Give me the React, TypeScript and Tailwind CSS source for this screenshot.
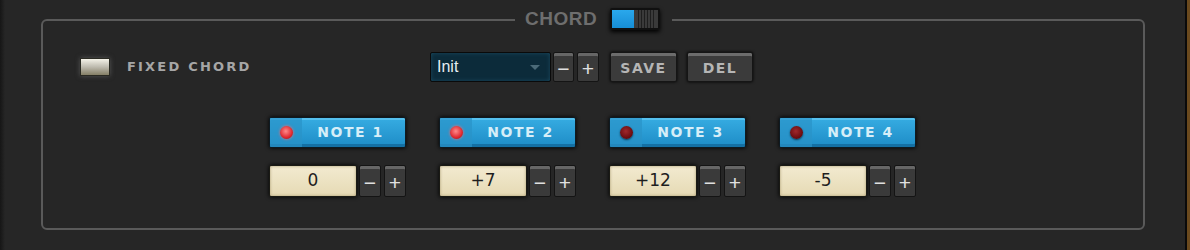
import React from "react";

type Note = { label: string; value: string; lit: boolean };

const notes: Note[] = [
  { label: "NOTE 1", value: "0", lit: true },
  { label: "NOTE 2", value: "+7", lit: true },
  { label: "NOTE 3", value: "+12", lit: false },
  { label: "NOTE 4", value: "-5", lit: false },
];

const font = { fontFamily: '"DejaVu Sans", Verdana, sans-serif' };

function StepButton({ sign, wide }: { sign: string; wide?: boolean }) {
  return (
    <div
      className={`flex h-full items-center justify-center rounded-[2px] border border-[#141414] bg-[#3a3a3a] text-[21px] leading-none text-[#e0e0e0] shadow-[inset_0_3px_0_#666] ${
        wide ? "w-[22px]" : "w-[21px]"
      }`}
      style={{ fontFamily: '"Liberation Sans", Arial, sans-serif' }}
    >
      <span className="mt-[3px]">{sign}</span>
    </div>
  );
}

function GrayButton({ label, width }: { label: string; width: string }) {
  return (
    <div
      className={`flex h-[30px] items-center justify-center rounded-[2px] border border-[#151515] bg-[#3b3b3b] text-[14px] font-bold tracking-[1.5px] text-[#b5b5b5] shadow-[inset_0_3px_0_#6c6c6c,0_0_3px_#000] ${width}`}
      style={font}
    >
      <span className="mt-[2px]">{label}</span>
    </div>
  );
}

function NoteColumn({ note }: { note: Note }) {
  return (
    <div className="flex w-[137px] flex-col">
      <div className="flex h-[31px] overflow-hidden rounded-[2px] border border-[#0d1a22] bg-gradient-to-b from-[#36ace2] to-[#1d8cc6] shadow-[inset_0_-3px_0_#1470a4,inset_0_2px_0_#55c0ee,0_0_4px_#000]">
        <div className="flex w-[32px] items-center justify-center bg-[#2a93c8]/70">
          <div
            className={`h-[13px] w-[13px] rounded-full ${
              note.lit
                ? "bg-[radial-gradient(circle_at_45%_40%,#ff8a8a,#e0282f_60%,#8a1016)] shadow-[0_0_3px_#ff6b6b]"
                : "bg-[radial-gradient(circle_at_45%_40%,#a0282c,#6a0c10_65%,#3a0508)] shadow-[0_1px_2px_#0a3a55]"
            }`}
          />
        </div>
        <div
          className="flex flex-1 items-center justify-center pr-[6px] text-[14px] font-bold tracking-[1.5px] text-[#d6eef8]"
          style={font}
        >
          {note.label}
        </div>
      </div>
      <div className="mt-[17px] flex h-[32px]">
        <div
          className="flex w-[88px] items-center justify-center rounded-[2px] border border-[#1a1a14] bg-gradient-to-b from-[#f2ead0] to-[#e6dab4] text-[17px] text-[#1e1e1e] shadow-[inset_0_0_3px_#a89870,0_0_4px_#000]"
          style={font}
        >
          {note.value}
        </div>
        <div className="ml-[2px] flex gap-[3px]">
          <StepButton sign="−" wide />
          <StepButton sign="+" wide />
        </div>
      </div>
    </div>
  );
}

export default function App() {
  return (
    <div className="flex h-[250px] w-[1190px] overflow-hidden bg-[#262626]">
      <div className="w-[5px] bg-gradient-to-r from-[#161616] to-[#262626]" />
      <div className="flex-1 pl-[36px] pt-[19px]">
        <div className="relative h-[211px] w-[1104px] rounded-[6px] border-2 border-[#5a5a5a]">
          <div className="absolute left-[472px] top-[-14px] flex h-[24px] w-[157px] items-center bg-[#262626] pl-[10px]">
            <span
              className="text-[19px] font-bold tracking-[0.5px] text-[#6e6e6e]"
              style={{ fontFamily: '"Liberation Sans", Arial, sans-serif' }}
            >
              CHORD
            </span>
            <div className="ml-[13px] flex h-[22px] w-[50px] rounded-[2px] border-2 border-[#101010] shadow-[0_2px_4px_#000]">
              <div className="w-[22px] bg-gradient-to-b from-[#2aa8ec] to-[#168ed6]" />
              <div className="flex flex-1 justify-center gap-[2px] bg-[#3a3a3a] px-[2px]">
                {[0, 1, 2, 3, 4, 5].map((i) => (
                  <div key={i} className="w-[1px] bg-[#1e1e1e]" />
                ))}
              </div>
            </div>
          </div>

          <div className="flex flex-col pt-[31px]">
            <div className="flex h-[30px] items-center">
              <div className="flex w-[387px] items-center pl-[37px]">
                <div className="h-[18px] w-[30px] rounded-[1px] border border-[#2a2a22] bg-gradient-to-b from-[#f4f2e8] via-[#bdbaae] to-[#857f66] shadow-[0_0_5px_#555]" />
                <span
                  className="ml-[17px] text-[13px] font-bold tracking-[2.2px] text-[#a6a6a6]"
                  style={font}
                >
                  FIXED CHORD
                </span>
              </div>
              <div className="flex h-[30px] w-[121px] items-center justify-between rounded-[2px] border border-[#0a0a0a] bg-[#0c2b3a] pl-[6px] pr-[10px] shadow-[inset_0_0_4px_#1a4a60]">
                <span
                  className="text-[16px] text-[#e6eef2]"
                  style={{ fontFamily: '"Liberation Sans", Arial, sans-serif' }}
                >
                  Init
                </span>
                <div className="h-0 w-0 border-x-[5px] border-t-[5px] border-x-transparent border-t-[#4b6a78]" />
              </div>
              <div className="ml-[2px] flex h-[30px] gap-[3px]">
                <StepButton sign="−" />
                <StepButton sign="+" wide />
              </div>
              <div className="ml-[11px]">
                <GrayButton label="SAVE" width="w-[67px]" />
              </div>
              <div className="ml-[10px]">
                <GrayButton label="DEL" width="w-[66px]" />
              </div>
            </div>

            <div className="mt-[35px] flex gap-[33px] pl-[226px]">
              {notes.map((n) => (
                <NoteColumn key={n.label} note={n} />
              ))}
            </div>
          </div>
        </div>
      </div>
      <div className="w-[2px] bg-[#0a0a0a]" />
      <div className="w-[3px] bg-[#6b4a1e]" />
    </div>
  );
}
